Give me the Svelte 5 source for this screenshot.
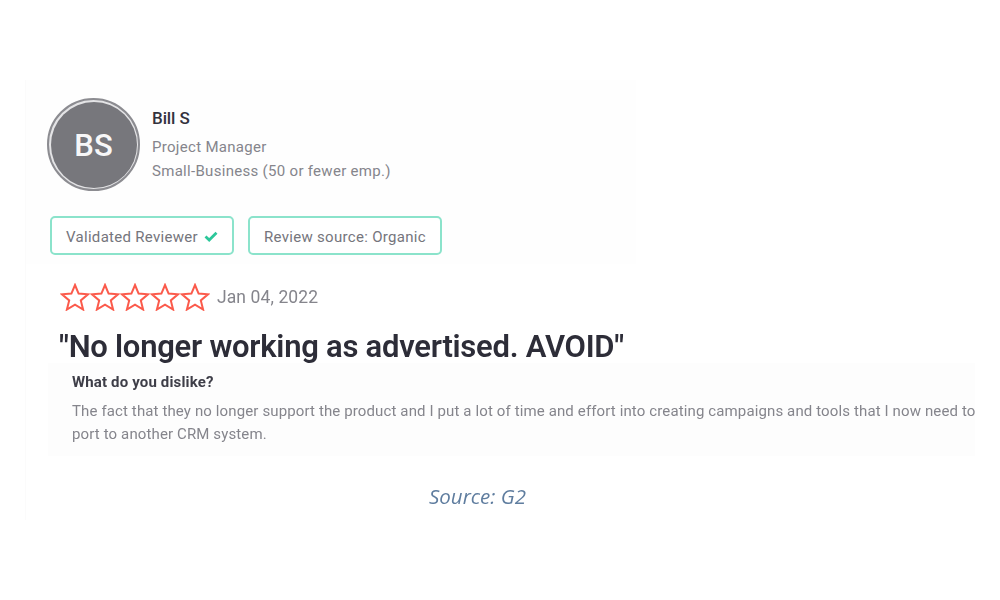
<script>
  const name = 'Bill S';
  const badges = ['Validated Reviewer', 'Review source: Organic'];
  const stars = [0, 1, 2, 3, 4];
</script>

<main class="shot">
  <section class="profile">
    <div class="person">
      <div class="avatar"><span>BS</span></div>
      <div class="who">
        <h2>{name}</h2>
        <p>Project Manager</p>
        <p>Small-Business (50 or fewer emp.)</p>
      </div>
    </div>
    <div class="badges">
      <div class="badge">
        {badges[0]}
        <svg width="14" height="11" viewBox="0 0 14 11">
          <path d="M1.5 5.5 L5.2 9 L12.5 1.8" fill="none" stroke="#2cc79a" stroke-width="2.8" />
        </svg>
      </div>
      <div class="badge">{badges[1]}</div>
    </div>
  </section>

  <section class="rating">
    <div class="stars">
      {#each stars as s}
        <svg width="30" height="28" viewBox="0 0 30 28">
          <path
            d="M15 2 L18.6 10.6 L28 11.3 L20.8 17.4 L23.1 26.5 L15 21.6 L6.9 26.5 L9.2 17.4 L2 11.3 L11.4 10.6 Z"
            fill="none"
            stroke="#fb5a4b"
            stroke-width="2"
          />
        </svg>
      {/each}
    </div>
    <span class="date">Jan 04, 2022</span>
  </section>

  <h1>"No longer working as advertised. AVOID"</h1>

  <section class="body">
    <h3>What do you dislike?</h3>
    <p>The fact that they no longer support the product and I put a lot of time and effort into creating campaigns and tools that I now need to port to another CRM system.</p>
  </section>

  <div class="source">Source: G2</div>
</main>

<style>
  :global(body) {
    background: #fff;
    font-family: Roboto, "Liberation Sans", sans-serif;
  }

  .shot {
    box-sizing: border-box;
    width: 950px;
    height: 440px;
    margin: 80px 0 0 25px;
    border-left: 1px solid #fbfbfb;
    display: flex;
    flex-direction: column;
    filter: blur(0.35px);
  }

  .profile {
    width: 610px;
    height: 184px;
    box-sizing: border-box;
    padding: 18px 0 0 21px;
    background: #fefefe;
  }

  .person {
    display: flex;
    gap: 12px;
  }

  .avatar {
    box-sizing: border-box;
    width: 93px;
    height: 93px;
    border-radius: 50%;
    border: 2.5px solid #8c8c91;
    padding: 1.5px;
    background: #e4e4e6;
    flex: none;
  }

  .avatar span {
    display: flex;
    align-items: center;
    justify-content: center;
    height: 100%;
    padding-top: 2px;
    box-sizing: border-box;
    border-radius: 50%;
    background: #77777c;
    color: #f7f7f8;
    font-size: 31px;
    font-weight: 500;
  }

  .who h2 {
    margin: 10px 0 7px;
    font-size: 17px;
    line-height: 20px;
    font-weight: 500;
    color: #33323d;
    letter-spacing: -0.1px;
  }

  .who p {
    margin: 0;
    font-size: 15px;
    line-height: 24px;
    color: #85858c;
    letter-spacing: 0.3px;
  }

  .badges {
    display: flex;
    gap: 14px;
    margin: 25px 0 0 3px;
  }

  .badge {
    box-sizing: border-box;
    height: 39px;
    padding: 2px 14px 0;
    display: flex;
    align-items: center;
    gap: 6px;
    border: 2px solid #8be3cb;
    border-radius: 5px;
    font-size: 15px;
    color: #75757c;
    letter-spacing: 0.3px;
    background: #fff;
  }

  .rating {
    display: flex;
    align-items: center;
    gap: 7px;
    margin: 19px 0 0 34px;
    height: 28px;
  }

  .stars {
    display: flex;
    width: 150px;
  }

  .date {
    font-size: 17.5px;
    color: #85858c;
    letter-spacing: 0.1px;
  }

  h1 {
    margin: 20px 0 0 33px;
    font-size: 31px;
    line-height: 32px;
    font-weight: 600;
    color: #2d2d38;
    letter-spacing: -0.25px;
    white-space: nowrap;
  }

  .body {
    box-sizing: border-box;
    height: 93px;
    margin: 0 0 0 22px;
    padding: 10px 0 0 24px;
    background: #fdfdfd;
    overflow: hidden;
  }

  h3 {
    margin: 0 0 9px;
    font-size: 15px;
    line-height: 18px;
    font-weight: 700;
    color: #3e3e48;
    letter-spacing: 0.15px;
  }

  .body p {
    margin: 0;
    width: 912px;
    font-size: 15px;
    line-height: 23px;
    color: #85858c;
    letter-spacing: 0.125px;
  }

  .source {
    margin: 26px 0 0 403px;
    font-family: "Open Sans", sans-serif;
    font-style: italic;
    font-size: 20.5px;
    line-height: 28px;
    color: #5f7d9f;
  }
</style>
